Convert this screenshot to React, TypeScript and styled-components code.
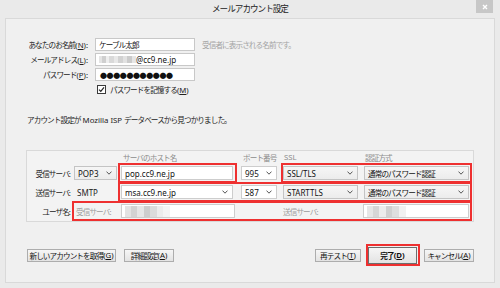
import React from "react";
import styled, { createGlobalStyle, css } from "styled-components";

const GlobalStyle = createGlobalStyle`
  html, body { margin: 0; padding: 0; }
  body {
    background: #eaeaea;
    font-family: "Noto Sans", "Noto Sans CJK JP", sans-serif;
    color: #1e1e1e;
  }
  u { text-underline-offset: 1px; }
`;

const jp = css`
  font-family: "Noto Sans", "Noto Sans CJK JP", sans-serif;
  font-size: 7.6px;
  letter-spacing: -0.9px;
  white-space: nowrap;
`;

const Latin = styled.span`
  font-size: 7.8px;
  letter-spacing: 0;
`;

const Mn = ({ k, colon }: { k: string; colon?: boolean }) => (
  <Latin>
    (<u>{k}</u>){colon ? ":" : ""}
  </Latin>
);

const Window = styled.div`
  width: 500px;
  height: 288px;
  display: flex;
  flex-direction: column;
  background: #eaeaea;
`;

const TitleBar = styled.div`
  height: 18px;
  display: grid;
  grid-template-columns: 1fr auto 1fr;
  align-items: start;
`;

const Title = styled.div`
  grid-column: 2;
  ${jp};
  font-size: 8.6px;
  letter-spacing: -1px;
  line-height: 19px;
  color: #222;
`;

const CloseButton = styled.div`
  grid-column: 3;
  justify-self: end;
  margin-right: 7px;
  width: 17px;
  height: 13px;
  background: #c7c7c7;
  display: flex;
  align-items: center;
  justify-content: center;
`;

const Panel = styled.div`
  flex: 1;
  margin: 0 5px 5px 5px;
  border: 1px solid #d9d9d9;
  background: #f0f0f0;
  display: flex;
  flex-direction: column;
`;

const IdentityGrid = styled.div`
  margin-top: 19px;
  display: grid;
  grid-template-columns: 82px 100px auto;
  grid-auto-rows: 13px;
  column-gap: 7px;
  row-gap: 2px;
  align-items: center;
`;

const FieldLabel = styled.div`
  ${jp};
  text-align: right;
  color: #222;
`;

const TextBox = styled.div`
  height: 13px;
  box-sizing: border-box;
  border: 1px solid #c8c8c8;
  background: #fff;
  display: flex;
  align-items: center;
  padding-left: 3px;
  overflow: hidden;
`;

const JpValue = styled.span`
  ${jp};
  color: #111;
`;

const LatinValue = styled.span`
  font-size: 8px;
  color: #111;
  white-space: nowrap;
`;

const Dots = styled.span`
  font-family: "Noto Sans CJK JP", sans-serif;
  font-size: 7px;
  letter-spacing: -0.4px;
  color: #111;
  padding-left: 1px;
`;

const Hint = styled.span`
  ${jp};
  color: #a3a3a3;
`;

const CheckRow = styled.div`
  grid-column: 2 / span 2;
  display: flex;
  align-items: center;
  gap: 4px;
  margin-left: 2px;
  ${jp};
  color: #222;
`;

const CheckBox = styled.span`
  width: 9px;
  height: 9px;
  box-sizing: border-box;
  border: 1px solid #3a3a3a;
  background: #fff;
  display: flex;
  align-items: center;
  justify-content: center;
`;

const InfoText = styled.p`
  margin: 18px 0 0 21px;
  ${jp};
  line-height: 12px;
  color: #222;
`;

const GroupBox = styled.div`
  margin: 24px 0 0 20px;
  width: 448px;
  box-sizing: border-box;
  border: 1px solid #d9d9d9;
  background: #f3f3f3;
  display: flex;
  flex-direction: column;
`;

const HeaderRow = styled.div`
  height: 12px;
  display: flex;
  align-items: center;
  ${jp};
  color: #8c8c8c;
`;

const ServerRow = styled.div`
  height: 20px;
  display: flex;
  align-items: center;
  & + & {
    margin-top: -1px;
  }
`;

const RowLabel = styled.div`
  width: 45px;
  flex-shrink: 0;
  box-sizing: border-box;
  padding-right: 2px;
  text-align: right;
  ${jp};
  color: #222;
`;

const Cell = styled.div<{ $w: number; $pl?: number }>`
  width: ${(p) => p.$w}px;
  padding-left: ${(p) => p.$pl ?? 0}px;
  box-sizing: border-box;
  flex-shrink: 0;
  display: flex;
  align-items: center;
`;

const SubLabel = styled(Cell)`
  ${jp};
  color: #9c9c9c;
`;

const Highlight = styled.div<{ $w: number }>`
  width: ${(p) => p.$w}px;
  height: 20px;
  box-sizing: border-box;
  border: 2px solid #ee3030;
  display: flex;
  align-items: center;
  flex-shrink: 0;
`;

const Field = styled.div<{ $w: number; $ml?: number; $kind: "input" | "combo" | "select" }>`
  width: ${(p) => p.$w}px;
  margin-left: ${(p) => p.$ml ?? 0}px;
  height: 14px;
  box-sizing: border-box;
  flex-shrink: 0;
  border: 1px solid ${(p) => (p.$kind === "select" ? "#c4c4c4" : "#cdcdcd")};
  background: ${(p) => (p.$kind === "select" ? "linear-gradient(#f6f6f6, #ececec)" : "#fff")};
  display: flex;
  align-items: center;
  justify-content: space-between;
  padding: 0 4px 0 3px;
  overflow: hidden;
`;

const PlainText = styled.span`
  font-size: 8px;
  color: #222;
  margin-left: 5px;
`;

const Mosaic = styled.span<{ $h: number }>`
  display: flex;
  height: ${(p) => p.$h}px;
  flex-shrink: 0;
`;

const Tile = styled.span<{ $w: number; $c: string }>`
  display: block;
  width: ${(p) => p.$w}px;
  height: 100%;
  background: ${(p) => p.$c};
`;

const ButtonBar = styled.div`
  margin: 22px 20px 0 21px;
  height: 22px;
  display: flex;
  align-items: center;
`;

const Spacer = styled.div`
  flex: 1;
`;

const Button = styled.div<{ $w: number; $ml?: number; $primary?: boolean }>`
  width: ${(p) => p.$w}px;
  margin-left: ${(p) => p.$ml ?? 0}px;
  height: ${(p) => (p.$primary ? 17 : 13)}px;
  box-sizing: border-box;
  flex-shrink: 0;
  border: 1px solid ${(p) => (p.$primary ? "#6d6d6d" : "#adadad")};
  background: linear-gradient(#f6f6f6, #e3e3e3);
  display: flex;
  align-items: center;
  justify-content: center;
  ${jp};
  color: #111;
  font-weight: ${(p) => (p.$primary ? 700 : 400)};
`;

const ButtonHighlight = styled.div<{ $ml: number }>`
  margin-left: ${(p) => p.$ml}px;
  width: 54px;
  height: 22px;
  box-sizing: border-box;
  border: 2px solid #ee3030;
  display: flex;
  align-items: center;
  flex-shrink: 0;
`;

const Chevron = () => (
  <svg width="6" height="4" viewBox="0 0 6 4">
    <path d="M0.5 0.6 L3 3.2 L5.5 0.6" stroke="#555" strokeWidth="1" fill="none" />
  </svg>
);

const mailTiles: [number, string][] = [
  [3, "#e4e4e4"], [4, "#cfcfcf"], [3, "#eeeeee"], [5, "#d9d9d9"], [4, "#e8e8e8"],
  [5, "#d2d2d2"], [4, "#e2e2e2"], [5, "#cbcbcb"], [4, "#e6e6e6"],
];
const userTilesA: [number, string][] = [
  [6, "#e3e3e3"], [6, "#d3d3d3"], [7, "#e6e6e6"], [6, "#cdcdcd"], [7, "#dbdbdb"], [6, "#ececec"], [7, "#f4f4f4"],
];
const userTilesB: [number, string][] = [
  [6, "#e6e6e6"], [6, "#d6d6d6"], [7, "#ececec"], [6, "#d0d0d0"], [7, "#dedede"], [7, "#f1f1f1"],
];

const renderTiles = (tiles: [number, string][], h: number) => (
  <Mosaic $h={h}>
    {tiles.map(([w, c], i) => (
      <Tile key={i} $w={w} $c={c} />
    ))}
  </Mosaic>
);

export default function App() {
  return (
    <>
      <GlobalStyle />
      <Window>
        <TitleBar>
          <Title>メールアカウント設定</Title>
          <CloseButton>
            <svg width="6" height="6" viewBox="0 0 6 6">
              <path d="M1 1 L5 5 M5 1 L1 5" stroke="#fff" strokeWidth="1.4" />
            </svg>
          </CloseButton>
        </TitleBar>
        <Panel>
          <IdentityGrid>
            <FieldLabel>
              あなたのお名前<Mn k="N" colon />
            </FieldLabel>
            <TextBox>
              <JpValue>ケーブル太郎</JpValue>
            </TextBox>
            <Hint>受信者に表示される名前です。</Hint>

            <FieldLabel>
              メールアドレス<Mn k="L" colon />
            </FieldLabel>
            <TextBox>
              {renderTiles(mailTiles, 7)}
              <LatinValue>@cc9.ne.jp</LatinValue>
            </TextBox>
            <span />

            <FieldLabel>
              パスワード<Mn k="P" colon />
            </FieldLabel>
            <TextBox>
              <Dots>●●●●●●●●●●●</Dots>
            </TextBox>
            <span />

            <CheckRow>
              <CheckBox>
                <svg width="7" height="7" viewBox="0 0 7 7">
                  <path d="M1 3.6 L2.8 5.4 L6 1.4" stroke="#222" strokeWidth="1.2" fill="none" />
                </svg>
              </CheckBox>
              <span>
                パスワードを記憶する<Mn k="M" />
              </span>
            </CheckRow>
          </IdentityGrid>

          <InfoText>
            アカウント設定が<Latin> Mozilla ISP </Latin>データベースから見つかりました。
          </InfoText>

          <GroupBox>
            <HeaderRow>
              <Cell $w={91} />
              <Cell $w={119} $pl={5}>サーバのホスト名</Cell>
              <Cell $w={44} $pl={6}>ポート番号</Cell>
              <Cell $w={82} $pl={3}>
                <Latin>SSL</Latin>
              </Cell>
              <Cell $w={109} $pl={2}>認証方式</Cell>
            </HeaderRow>

            <ServerRow>
              <RowLabel>受信サーバ:</RowLabel>
              <Cell $w={46}>
                <Field $kind="select" $w={43} $ml={2}>
                  <LatinValue>POP3</LatinValue>
                  <Chevron />
                </Field>
              </Cell>
              <Highlight $w={119}>
                <Field $kind="input" $w={112} $ml={1}>
                  <LatinValue>pop.cc9.ne.jp</LatinValue>
                </Field>
              </Highlight>
              <Cell $w={44}>
                <Field $kind="combo" $w={36} $ml={4}>
                  <LatinValue>995</LatinValue>
                  <Chevron />
                </Field>
              </Cell>
              <Highlight $w={191}>
                <Field $kind="select" $w={75}>
                  <LatinValue>SSL/TLS</LatinValue>
                  <Chevron />
                </Field>
                <Field $kind="select" $w={105} $ml={6}>
                  <JpValue>通常のパスワード認証</JpValue>
                  <Chevron />
                </Field>
              </Highlight>
            </ServerRow>

            <ServerRow>
              <RowLabel>送信サーバ:</RowLabel>
              <Cell $w={46}>
                <PlainText>SMTP</PlainText>
              </Cell>
              <Highlight $w={354}>
                <Field $kind="combo" $w={112} $ml={1}>
                  <LatinValue>msa.cc9.ne.jp</LatinValue>
                  <Chevron />
                </Field>
                <Field $kind="combo" $w={36} $ml={8}>
                  <LatinValue>587</LatinValue>
                  <Chevron />
                </Field>
                <Field $kind="select" $w={75} $ml={6}>
                  <LatinValue>STARTTLS</LatinValue>
                  <Chevron />
                </Field>
                <Field $kind="select" $w={105} $ml={6}>
                  <JpValue>通常のパスワード認証</JpValue>
                  <Chevron />
                </Field>
              </Highlight>
            </ServerRow>

            <ServerRow>
              <RowLabel>ユーザ名:</RowLabel>
              <Highlight $w={400}>
                <SubLabel $w={47} $pl={2}>受信サーバ:</SubLabel>
                <Field $kind="input" $w={114}>
                  {renderTiles(userTilesA, 11)}
                </Field>
                <SubLabel $w={128} $pl={48}>送信サーバ:</SubLabel>
                <Field $kind="input" $w={106}>
                  {renderTiles(userTilesB, 11)}
                </Field>
              </Highlight>
            </ServerRow>
          </GroupBox>

          <ButtonBar>
            <Button $w={89}>
              新しいアカウントを取得<Mn k="G" />
            </Button>
            <Button $w={50} $ml={8}>
              詳細設定<Mn k="A" />
            </Button>
            <Spacer />
            <Button $w={46}>
              再テスト<Mn k="T" />
            </Button>
            <ButtonHighlight $ml={5}>
              <Button $w={49} $primary>
                完了<Mn k="D" />
              </Button>
            </ButtonHighlight>
            <Button $w={50} $ml={4}>
              キャンセル<Mn k="A" />
            </Button>
          </ButtonBar>
        </Panel>
      </Window>
    </>
  );
}
